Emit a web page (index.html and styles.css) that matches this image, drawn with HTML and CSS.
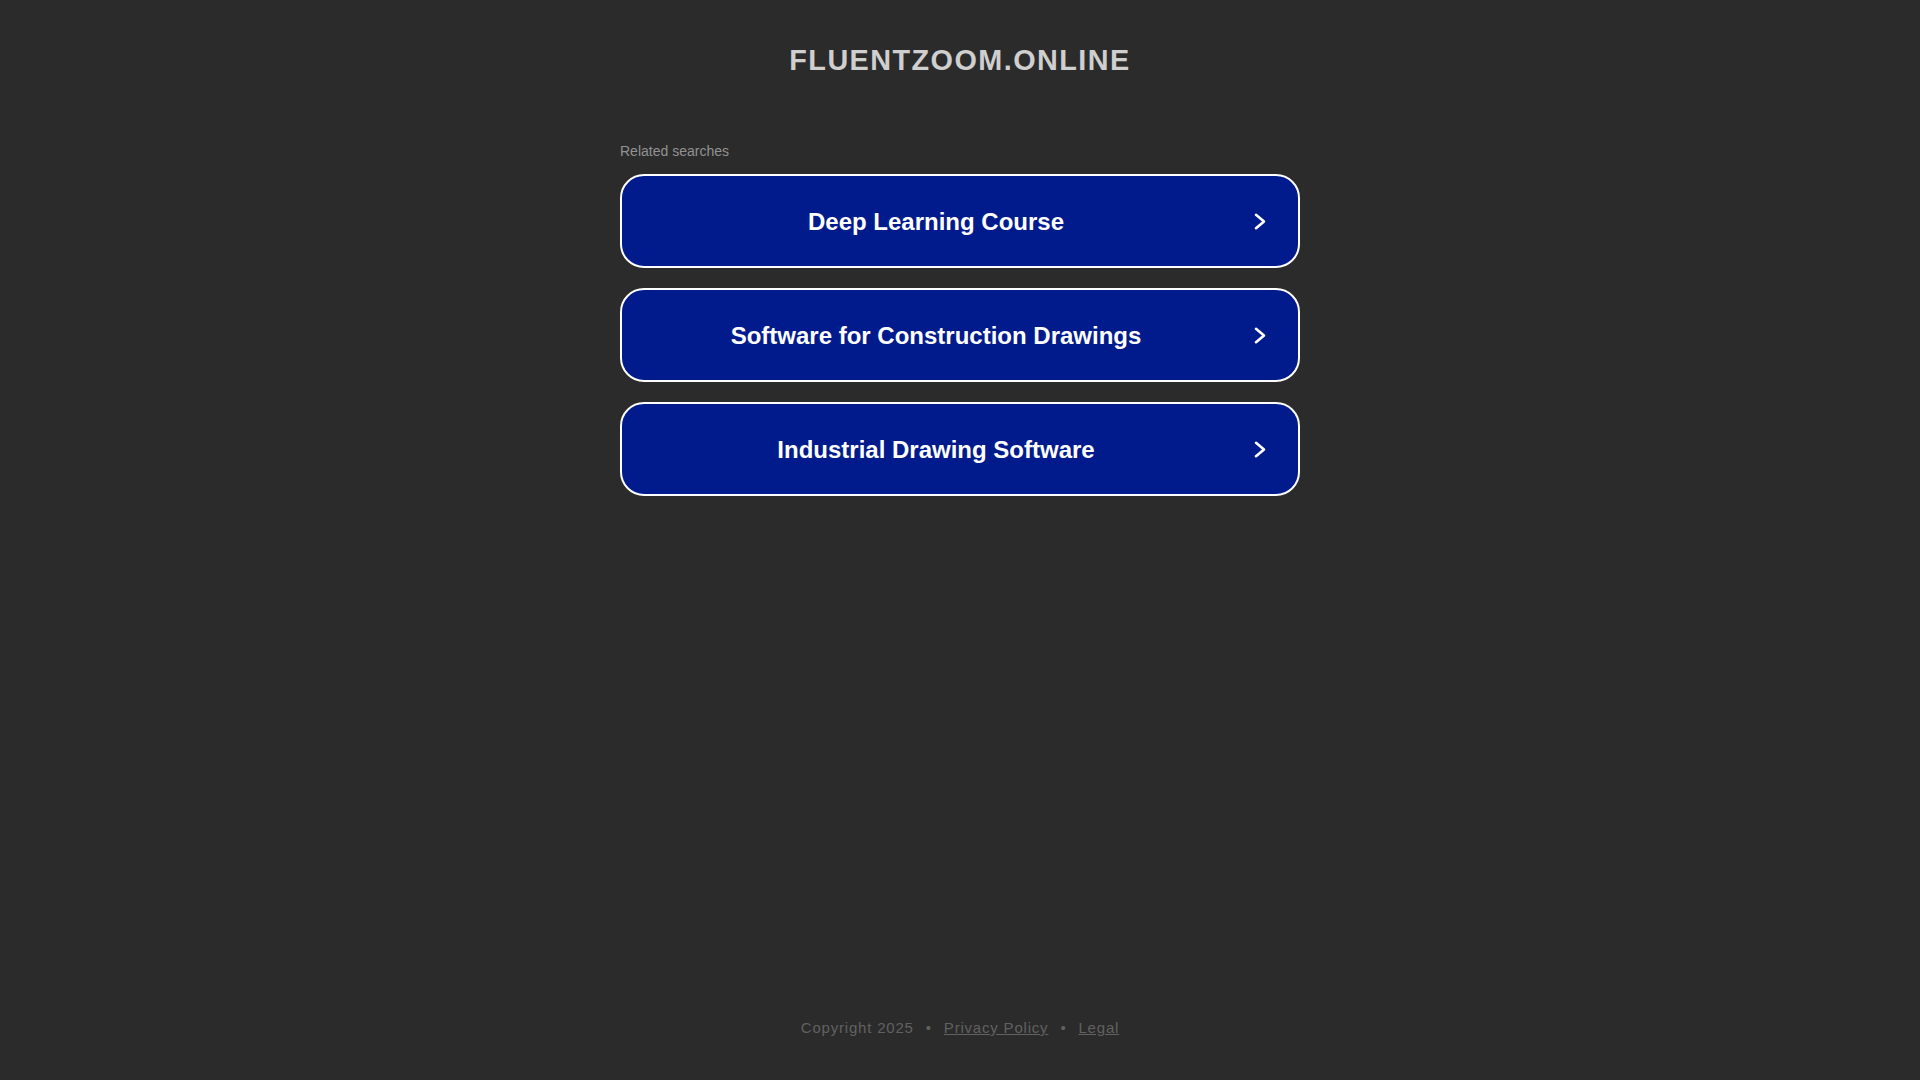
FILE: index.html
```html
<!DOCTYPE html>
<html lang="en">
<head>
<meta charset="utf-8">
<title>fluentzoom.online</title>
<link rel="stylesheet" href="styles.css">
</head>
<body>
<div class="page">
  <header class="header">
    <h1 class="domain">fluentzoom.online</h1>
  </header>
  <main class="content">
    <div class="related">Related searches</div>
    <ul class="links">
      <li>
        <a class="link-btn" href="#">
          <span class="link-text">Deep Learning Course</span>
          <svg class="chev" viewBox="0 0 20 20" width="20" height="20" aria-hidden="true"><path d="M6 3.8 L14 10.5 L6 17.2"/></svg>
        </a>
      </li>
      <li>
        <a class="link-btn" href="#">
          <span class="link-text">Software for Construction Drawings</span>
          <svg class="chev" viewBox="0 0 20 20" width="20" height="20" aria-hidden="true"><path d="M6 3.8 L14 10.5 L6 17.2"/></svg>
        </a>
      </li>
      <li>
        <a class="link-btn" href="#">
          <span class="link-text">Industrial Drawing Software</span>
          <svg class="chev" viewBox="0 0 20 20" width="20" height="20" aria-hidden="true"><path d="M6 3.8 L14 10.5 L6 17.2"/></svg>
        </a>
      </li>
    </ul>
  </main>
  <footer class="footer">
    <span>Copyright 2025</span><span class="sep">•</span><a href="#">Privacy Policy</a><span class="sep">•</span><a href="#">Legal</a>
  </footer>
</div>
</body>
</html>
```
FILE: styles.css
```css
html, body {
  margin: 0;
  padding: 0;
  background: #2b2b2b;
  font-family: "Liberation Sans", Arial, sans-serif;
}

.page {
  min-height: 100vh;
  display: flex;
  flex-direction: column;
}

.header {
  padding-top: 46px;
  text-align: center;
}

.domain {
  margin: 0;
  font-size: 28.8px;
  line-height: 1;
  font-weight: 700;
  letter-spacing: 1.45px;
  text-transform: uppercase;
  color: #cfcfcf;
}

.content {
  width: 680px;
  margin: 0 auto;
  padding-top: 69px;
}

.related {
  font-size: 14px;
  line-height: 1;
  color: #929292;
  margin-bottom: 16px;
}

.links {
  list-style: none;
  margin: 0;
  padding: 0;
  display: flex;
  flex-direction: column;
  gap: 20px;
}

.link-btn {
  box-sizing: border-box;
  height: 94px;
  display: flex;
  align-items: center;
  padding-right: 28px;
  background: #011b8c;
  border: 2px solid #ffffff;
  border-radius: 24px;
  text-decoration: none;
  color: #ffffff;
}

.link-text {
  flex: 1;
  text-align: center;
  font-size: 24px;
  font-weight: 700;
  line-height: 1;
  padding-top: 3px;
}

.chev {
  flex: none;
  display: block;
}

.chev path {
  fill: none;
  stroke: #ffffff;
  stroke-width: 2.6;
  stroke-linecap: round;
  stroke-linejoin: round;
}

.footer {
  margin-top: auto;
  padding-bottom: 45px;
  text-align: center;
  font-size: 15px;
  line-height: 1;
  letter-spacing: 0.8px;
  color: #616161;
}

.footer a {
  color: #616161;
  text-decoration: underline;
}

.sep {
  margin: 0 12px;
}
```
